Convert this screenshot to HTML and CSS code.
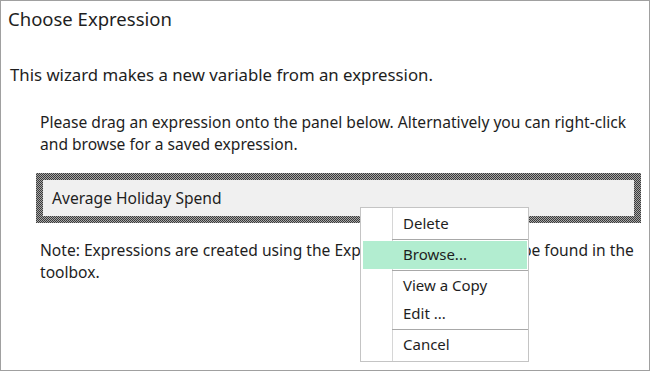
FILE: index.html
```html
<!DOCTYPE html>
<html lang="en">
<head>
  <meta charset="UTF-8">
  <meta name="viewport" content="width=device-width, initial-scale=1.0">
  <title>Choose Expression</title>
  <link rel="stylesheet" href="styles.css">
</head>
<body>
  <!-- Wizard Page -->
  <div class="wizard">
    <h1 class="wizard-title">Choose Expression</h1>
    <p class="intro">This wizard makes a new variable from an expression.</p>

    <div class="wizard-body">
      <p class="hint">Please drag an expression onto the panel below. Alternatively you can right-click and browse for a saved expression.</p>

      <!-- Drop Panel -->
      <div class="drop-panel">
        <div class="drop-inner">Average Holiday Spend</div>
      </div>

      <p class="hint note">Note: Expressions are created using the Expression Tools and can be found in the toolbox.</p>
    </div>

    <!-- Context Menu -->
    <ul class="context-menu">
      <li class="menu-item">Delete</li>
      <li class="menu-sep"></li>
      <li class="menu-item active">Browse...</li>
      <li class="menu-sep"></li>
      <li class="menu-item">View a Copy</li>
      <li class="menu-item">Edit ...</li>
      <li class="menu-sep"></li>
      <li class="menu-item">Cancel</li>
    </ul>
  </div>
</body>
</html>
```

FILE: styles.css
```css
body {
  margin: 0;
  background-color: #fff;
  font-family: "Noto Sans", "Open Sans", sans-serif;
  color: #1e1e1e;
}

.wizard {
  position: relative;
  box-sizing: border-box;
  width: 650px;
  height: 371px;
  border: 1px solid #a0a0a0;
  padding: 4px 0 0 0;
}

.wizard-title {
  margin: 0 0 0 7px;
  font-size: 18.5px;
  font-weight: normal;
  line-height: 28px;
}

.intro {
  margin: 31px 0 0 9px;
  font-size: 16.8px;
  line-height: 22px;
}

.wizard-body {
  margin: 25px 8px 0 35px;
}

.hint {
  margin: 0;
  padding-left: 4px;
  font-size: 15.6px;
  line-height: 22px;
}

.drop-panel {
  margin-top: 18px;
  padding: 7px;
  height: 50px;
  box-sizing: border-box;
  background: repeating-conic-gradient(#3a3a3a 0 25%, #a6a6a6 0 50%) 0 0 / 2px 2px;
}

.drop-inner {
  height: 100%;
  padding-left: 9px;
  background-color: #f0f0f0;
  font-size: 15.6px;
  line-height: 36px;
}

.note {
  margin-top: 16px;
}

/* Right-click menu */
.context-menu {
  position: absolute;
  left: 359px;
  top: 206px;
  width: 167px;
  margin: 0;
  padding: 2px 0;
  list-style: none;
  border: 1px solid #c4c4c4;
  background: linear-gradient(#d6d6d6, #d6d6d6) 31px 0 / 1px 100% no-repeat, #fff;
  font-size: 15px;
}

.menu-item {
  height: 26px;
  padding-bottom: 2px;
  line-height: 26px;
  padding-left: 42px;
}

.menu-item.active {
  margin: 0 1px 0 2px;
  padding-left: 40px;
  background-color: #b2edd0;
}

.menu-sep {
  height: 1px;
  margin: 1px 0 1px 31px;
  background-color: #a8a8a8;
}
```
